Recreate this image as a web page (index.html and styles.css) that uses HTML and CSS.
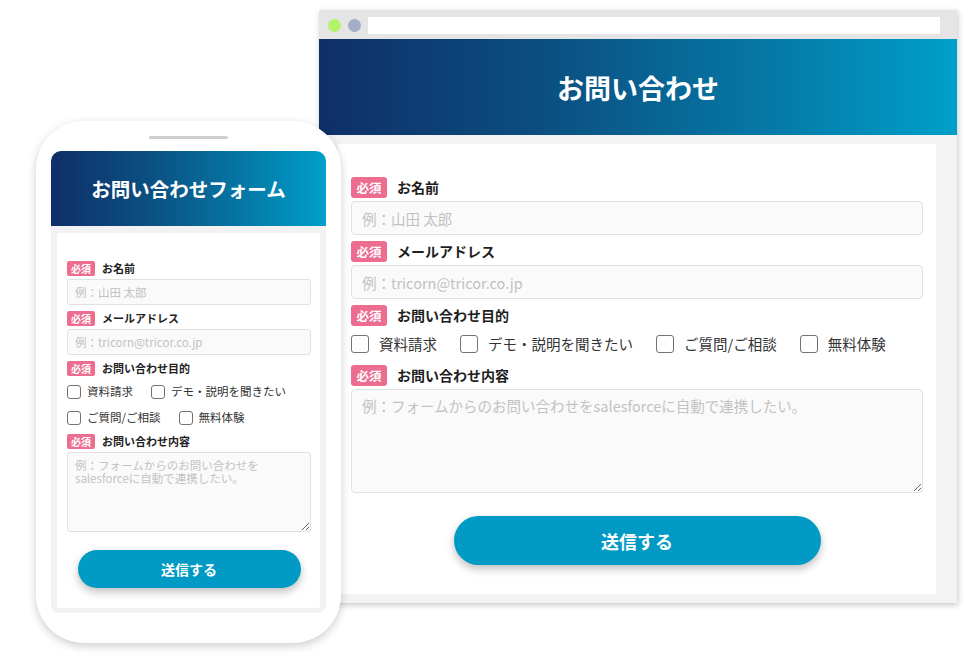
FILE: index.html
```html
<!DOCTYPE html>
<html lang="ja">
<head>
<meta charset="utf-8">
<title>お問い合わせ</title>
<link rel="stylesheet" href="styles.css">
</head>
<body>
<div class="canvas">
  <div class="browser">
    <div class="topbar"><span class="dot green"></span><span class="dot gray"></span><span class="url"></span></div>
    <div class="hero"><h1>お問い合わせ</h1></div>
    <div class="wbody">
      <form class="panel">
        <div class="label"><span class="req">必須</span><span class="ltext">お名前</span></div>
        <input class="inp" type="text" placeholder="例：山田 太郎">
        <div class="label"><span class="req">必須</span><span class="ltext">メールアドレス</span></div>
        <input class="inp" type="text" placeholder="例：tricorn@tricor.co.jp">
        <div class="label"><span class="req">必須</span><span class="ltext">お問い合わせ目的</span></div>
        <div class="checks">
          <label class="chk"><input type="checkbox">資料請求</label>
          <label class="chk"><input type="checkbox">デモ・説明を聞きたい</label>
          <label class="chk"><input type="checkbox">ご質問/ご相談</label>
          <label class="chk"><input type="checkbox">無料体験</label>
        </div>
        <div class="label"><span class="req">必須</span><span class="ltext">お問い合わせ内容</span></div>
        <textarea class="area" placeholder="例：フォームからのお問い合わせをsalesforceに自動で連携したい。"></textarea>
        <button class="submit" type="button">送信する</button>
      </form>
    </div>
  </div>

  <div class="phone">
    <div class="notch"></div>
    <div class="screen">
      <div class="hero"><h1>お問い合わせフォーム</h1></div>
      <div class="wbody">
        <form class="panel">
          <div class="label"><span class="req">必須</span><span class="ltext">お名前</span></div>
          <input class="inp" type="text" placeholder="例：山田 太郎">
          <div class="label"><span class="req">必須</span><span class="ltext">メールアドレス</span></div>
          <input class="inp" type="text" placeholder="例：tricorn@tricor.co.jp">
          <div class="label"><span class="req">必須</span><span class="ltext">お問い合わせ目的</span></div>
          <div class="checks">
            <label class="chk"><input type="checkbox">資料請求</label>
            <label class="chk"><input type="checkbox">デモ・説明を聞きたい</label>
            <label class="chk"><input type="checkbox">ご質問/ご相談</label>
            <label class="chk"><input type="checkbox">無料体験</label>
          </div>
          <div class="label"><span class="req">必須</span><span class="ltext">お問い合わせ内容</span></div>
          <textarea class="area" placeholder="例：フォームからのお問い合わせを&#10;salesforceに自動で連携したい。"></textarea>
          <button class="submit" type="button">送信する</button>
        </form>
      </div>
    </div>
  </div>
</div>
</body>
</html>
```

FILE: styles.css
```css
* { box-sizing: border-box; }
body {
  margin: 0;
  background: #fff;
  font-family: "Noto Sans CJK JP", "Noto Sans", sans-serif;
  color: #222;
}
.canvas {
  position: relative;
  width: 977px;
  height: 664px;
  overflow: hidden;
}

/* ---------- desktop browser ---------- */
.browser {
  position: absolute;
  left: 319px;
  top: 10px;
  width: 638px;
  height: 593px;
  display: flex;
  flex-direction: column;
  background: #f3f3f3;
  box-shadow: 1px 2px 6px rgba(0, 0, 0, 0.22);
}
.topbar {
  height: 29px;
  flex: none;
  background: #e5e5e5;
  display: flex;
  align-items: center;
  gap: 7px;
  padding: 0 17px 0 9px;
}
.dot {
  width: 13px;
  height: 13px;
  border-radius: 50%;
  flex: none;
  margin-top: 2px;
}
.green { background: #b3f46b; }
.gray { background: #a4acc6; }
.url {
  flex: 1;
  height: 17px;
  margin-top: 2px;
  background: #fff;
}
.hero {
  flex: none;
  height: 96px;
  background: linear-gradient(90deg, #0f2f68 0%, #0b4f80 35%, #0578a6 70%, #009fca 100%);
  display: flex;
  align-items: center;
  justify-content: center;
}
.hero h1 {
  margin: 0;
  color: #fff;
  font-size: 27px;
  font-weight: 700;
  line-height: 1;
}
.wbody {
  flex: 1;
  padding: 9px 21px 9px 19px;
}
.panel {
  height: 100%;
  margin: 0;
  background: #fff;
  display: flex;
  flex-direction: column;
  padding: 33px 13px 0;
}
.label {
  display: flex;
  align-items: center;
}
.req {
  flex: none;
  text-align: center;
  background: #ec6d90;
  color: #fff;
  font-weight: 700;
}
.ltext {
  font-weight: 700;
  color: #1e1e1e;
}
.inp, .area {
  font: inherit;
  color: #333;
  background: #fafafa;
  border: 1px solid #e1e1e1;
  border-radius: 4px;
  margin: 0;
  outline: none;
}
.inp::placeholder, .area::placeholder {
  color: #c2c2c2;
  opacity: 1;
}
.checks {
  display: flex;
  flex-wrap: wrap;
}
.chk {
  display: flex;
  align-items: center;
  color: #333;
}
.chk input {
  appearance: none;
  -webkit-appearance: none;
  margin: 0;
  flex: none;
  background: #fff;
  border: 1px solid #737373;
  border-radius: 3px;
}
.submit {
  align-self: center;
  border: none;
  background: #009ac5;
  color: #fff;
  font-family: inherit;
  font-weight: 700;
  box-shadow: 0 4px 8px rgba(0, 0, 0, 0.25);
  padding: 0;
}

.browser .label { height: 21px; gap: 10px; margin-bottom: 3px; }
.browser .req { width: 36px; height: 21px; line-height: 21px; font-size: 12.5px; border-radius: 3px; }
.browser .ltext { font-size: 14px; line-height: 21px; }
.browser .inp { height: 34px; padding: 0 10px; font-size: 14.5px; margin-bottom: 6px; }
.browser .checks { column-gap: 23px; margin: 6px 0 12px; }
.browser .chk { gap: 10px; font-size: 14.5px; height: 18px; line-height: 18px; }
.browser .chk input { width: 18px; height: 18px; }
.browser .area { height: 104px; padding: 6px 10px; font-size: 14.5px; line-height: 20px; }
.browser .submit { margin-top: 23px; width: 367px; height: 49px; border-radius: 25px; font-size: 18px; }

/* ---------- phone ---------- */
.phone {
  position: absolute;
  left: 36px;
  top: 121px;
  width: 305px;
  height: 522px;
  padding: 15px 15px 30px;
  background: #fff;
  border-radius: 48px;
  box-shadow: 0 3px 10px rgba(0, 0, 0, 0.2);
  display: flex;
  flex-direction: column;
  align-items: center;
}
.notch {
  width: 79px;
  height: 3px;
  border-radius: 2px;
  background: #cfcfcf;
  margin-bottom: 12px;
  flex: none;
}
.screen {
  width: 275px;
  display: flex;
  flex-direction: column;
}
.phone .hero { height: 75px; border-radius: 10px 10px 0 0; }
.phone .hero h1 { font-size: 19.5px; }
.phone .wbody {
  flex: none;
  padding: 7px 6px 5px;
  background: #f2f2f2;
  border-radius: 0 0 8px 8px;
}
.phone .panel { height: 375px; padding: 28px 9px 0 10px; border-radius: 3px; }
.phone .label { height: 15px; gap: 7px; margin-bottom: 3px; }
.phone .req { width: 28px; height: 15px; line-height: 15px; font-size: 10px; border-radius: 2px; }
.phone .ltext { font-size: 11px; line-height: 15px; }
.phone .inp { height: 26px; padding: 0 7px; font-size: 11.5px; margin-bottom: 6px; border-radius: 3px; }
.phone .checks { column-gap: 18px; row-gap: 11px; margin: 5px 0 9px; }
.phone .chk { gap: 6px; font-size: 11.5px; height: 15px; line-height: 15px; }
.phone .chk input { width: 14px; height: 14px; }
.phone .area { height: 80px; padding: 6px 7px; font-size: 11.5px; line-height: 13px; border-radius: 3px; }
.phone .submit { margin-top: 18px; width: 223px; height: 38px; border-radius: 19px; font-size: 14px; }
```
